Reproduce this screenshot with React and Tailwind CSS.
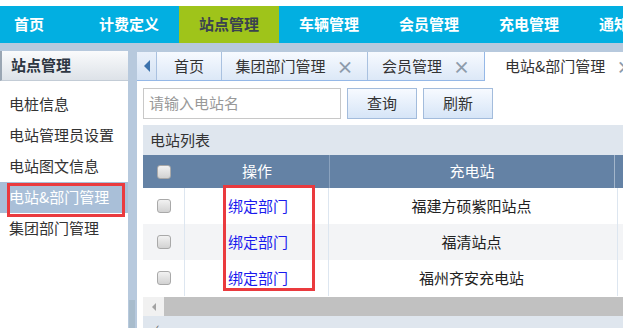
import React from 'react';

const font = { fontFamily: '"Noto Sans CJK SC", "Noto Sans", sans-serif' };

const navItems = ['计费定义', '站点管理', '车辆管理', '会员管理', '充电管理', '通知管理'];
const sideItems = ['电桩信息', '电站管理员设置', '电站图文信息', '电站&部门管理', '集团部门管理'];
const rows = ['福建方硕紫阳站点', '福清站点', '福州齐安充电站'];

function Checkbox() {
  return <span className="block w-[14px] h-[14px] rounded-[3px] border border-[#a9a9a9] bg-gradient-to-b from-[#f2f2f2] to-[#d2d2d2]" />;
}

function Close() {
  return <span className="ml-[11px] text-[17px] leading-none font-bold text-[#8d9bab]">×</span>;
}

export default function App() {
  return (
    <div className="w-[623px] h-[328px] overflow-hidden bg-[#b7c9dd] flex flex-col text-[15px] text-[#333]" style={font}>
      <div className="h-[6px] bg-white shrink-0" />

      {/* Top navigation */}
      <nav className="h-[37px] bg-[#02afe1] flex shrink-0 whitespace-nowrap font-bold text-white">
        <div className="w-[79px] shrink-0 pl-[14px] flex items-center">首页</div>
        {navItems.map((n) => (
          <div
            key={n}
            className={`w-[100px] shrink-0 flex items-center justify-center ${n === '站点管理' ? 'bg-[#9fc41a] text-[#3a4250]' : ''}`}
          >
            {n}
          </div>
        ))}
      </nav>

      <div className="flex flex-1 min-h-0 mt-[8px]">
        {/* Sidebar */}
        <aside className="w-[128px] shrink-0 bg-white flex flex-col">
          <div className="h-[30px] flex items-center pl-[9px] font-bold text-[#2d3642] bg-gradient-to-b from-[#fafbfc] to-[#dde2e8] border-b border-[#c3ccd6] border-l-[2px] border-l-[#9aa6b3]">
            站点管理
          </div>
          <div className="pt-[8px]">
            {sideItems.map((s) => {
              const on = s === '电站&部门管理';
              return (
                <div
                  key={s}
                  className={`relative h-[31px] flex items-center pl-[9px] whitespace-nowrap ${on ? 'bg-[#a9bfd8] text-white' : 'text-[#333]'}`}
                >
                  {s}
                  {on && <span className="absolute left-[7px] top-[1px] w-[118px] h-[34px] border-[3px] border-[#ea3a3e]" />}
                </div>
              );
            })}
          </div>
        </aside>

        {/* splitter */}
        <div className="w-[9px] shrink-0 flex flex-col">
          <div className="flex-1" />
          <div className="h-[28px] w-[6px] ml-[1px] bg-[#a8bccc]" />
        </div>

        {/* Main */}
        <main className="flex-1 min-w-0 mt-[1px] flex flex-col bg-white">
          {/* Tabs */}
          <div className="h-[29px] shrink-0 flex bg-[#e6eefa] border-b border-[#95b8e7] whitespace-nowrap">
            <div className="w-[20px] shrink-0 flex items-center justify-center bg-gradient-to-b from-[#eaf1fb] to-[#d4e2f3] border-r border-[#a9c1e0]">
              <span className="w-0 h-0 border-y-[6px] border-y-transparent border-r-[6px] border-r-[#3c73ad]" />
            </div>
            <div className="w-[65px] shrink-0 flex items-center justify-center bg-gradient-to-b from-[#f7faff] to-[#dce8f7] border-r border-[#a9c1e0]">首页</div>
            <div className="w-[146px] shrink-0 flex items-center justify-center bg-gradient-to-b from-[#f7faff] to-[#dce8f7] border-r border-[#a9c1e0]">
              集团部门管理<Close />
            </div>
            <div className="w-[117px] shrink-0 flex items-center justify-center bg-gradient-to-b from-[#f7faff] to-[#dce8f7] border-r border-[#95b8e7]">
              会员管理<Close />
            </div>
            <div className="w-[150px] shrink-0 flex items-center pl-[20px] bg-white -mb-px">
              电站&部门管理<Close />
            </div>
          </div>

          <div className="flex-1 min-h-0 pl-[6px] pt-[7px]">
            {/* Toolbar */}
            <div className="flex items-center h-[31px]">
              <div className="w-[198px] h-[31px] border border-[#c8c8c8] flex items-center pl-[5px] text-[#999]">请输入电站名</div>
              <button className="ml-[6px] w-[70px] h-[31px] border border-[#a3bcdc] bg-gradient-to-b from-[#f7faff] to-[#d6e5f7] text-[#333]">查询</button>
              <button className="ml-[6px] w-[70px] h-[31px] border border-[#a3bcdc] bg-gradient-to-b from-[#f7faff] to-[#d6e5f7] text-[#333]">刷新</button>
            </div>

            {/* Panel */}
            <div className="mt-[6px] w-[600px]">
              <div className="h-[30px] bg-[#dfe6ee] flex items-center pl-[7px] text-[#333]">电站列表</div>
              <div className="relative">
                <div className="h-[33px] bg-[#6482a5] flex text-white">
                  <div className="w-[42px] flex items-center justify-center"><Checkbox /></div>
                  <div className="w-[144px] flex items-center justify-center">操作</div>
                  <div className="w-[285px] flex items-center justify-center border-l border-[#8aa2be]">充电站</div>
                  <div className="flex-1 border-l border-[#a3b6cb]" />
                </div>
                {rows.map((r, i) => (
                  <div key={r} className={`h-[36px] flex ${i === 1 ? 'bg-[#f3f4f6]' : 'bg-white'}`}>
                    <div className="w-[42px] flex items-center justify-center border-r border-[#dde6f0]"><Checkbox /></div>
                    <div className="w-[144px] flex items-center pl-[43px] text-[#1a1aee] border-r border-[#dde6f0]">绑定部门</div>
                    <div className="w-[285px] flex items-center justify-center text-[#222]">{r}</div>
                    <div className="flex-1 border-l border-[#dde6f0] ml-[3px]" />
                  </div>
                ))}
                <span className="absolute left-[80px] top-[30px] w-[92px] h-[106px] border-[3px] border-[#ea3a3e]" />
              </div>

              {/* Horizontal scrollbar */}
              <div className="h-[19px] mt-[1px] flex bg-[#f1f1f1]">
                <div className="w-[21px] flex items-center justify-center">
                  <span className="w-0 h-0 border-y-[4px] border-y-transparent border-r-[4px] border-r-[#a3a3a3]" />
                </div>
                <div className="flex-1 bg-[#c1c1c1]" />
              </div>
              <div className="h-[12px] bg-[#dfe6ee] pl-[13px] text-[11px] leading-[20px] text-[#555]">‹</div>
            </div>
          </div>
        </main>
      </div>
    </div>
  );
}
